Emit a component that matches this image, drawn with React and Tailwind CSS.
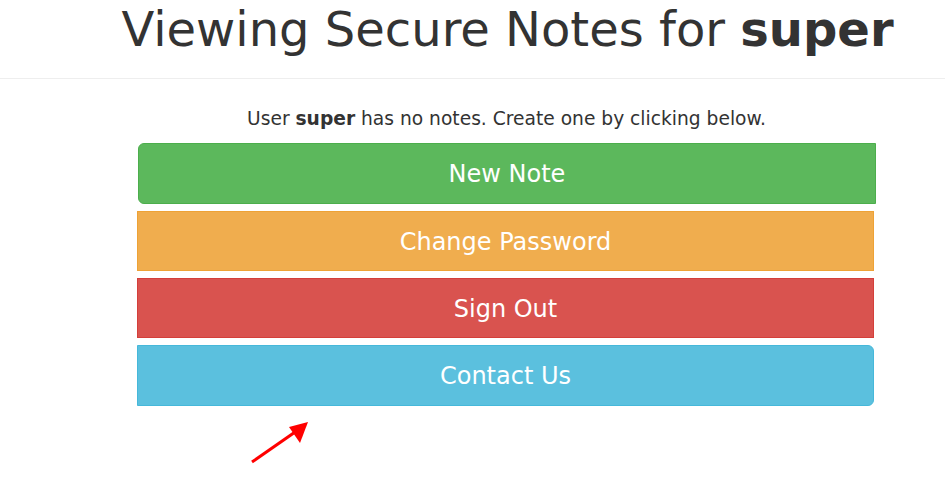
import React from 'react';

export default function App() {
    return (
        <div className="relative min-h-[487px] bg-white text-[#333] font-['DejaVu_Sans',sans-serif]">
            <div className="h-[79px] border-b border-[#eee] flex justify-center pl-[70px]">
                <h1 className="text-[48px] leading-[56px] pt-[1px] whitespace-nowrap">
                    Viewing Secure Notes for <b>super</b>
                </h1>
            </div>
            <div className="ml-[137px] w-[737px] pt-[28px]">
                <p className="text-center text-[18.67px] leading-[24px] mb-[12px] ml-[2px] whitespace-nowrap">
                    User <b>super</b> has no notes. Create one by clicking below.
                </p>
                <div className="flex flex-col gap-[7px]">
                    <button className="ml-[1px] w-[738px] h-[61px] rounded-l-[6px] bg-[#5cb85c] border border-[#4cae4c] text-white text-[24px]">
                        New Note
                    </button>
                    <button className="h-[60px] pt-[2px] bg-[#f0ad4e] border border-[#eea236] text-white text-[24px]">
                        Change Password
                    </button>
                    <button className="h-[60px] pt-[2px] bg-[#d9534f] border border-[#d43f3a] text-white text-[24px]">
                        Sign Out
                    </button>
                    <button className="h-[61px] rounded-r-[6px] bg-[#5bc0de] border border-[#46b8da] text-white text-[24px]">
                        Contact Us
                    </button>
                </div>
            </div>
            <svg className="absolute left-[248px] top-[418px]" width="64" height="48" viewBox="0 0 64 48">
                <line x1="4" y1="44" x2="50" y2="12" stroke="#ff0000" strokeWidth="3" />
                <polygon points="60,4 41,9 52,25" fill="#ff0000" />
            </svg>
        </div>
    );
}
